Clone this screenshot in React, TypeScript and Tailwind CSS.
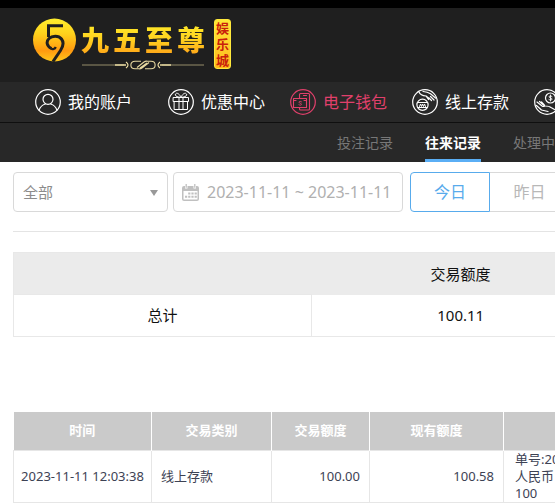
import type { ReactNode } from "react";

const navItems = [
  { label: "优惠中心", href: "#promo", icon: <GiftIcon />, active: false },
  { label: "电子钱包", href: "#wallet", icon: <WalletIcon />, active: true },
  { label: "线上存款", href: "#deposit", icon: <DepositIcon />, active: false },
];

const subNavItems = [
  { label: "投注记录", active: false },
  { label: "往来记录", active: true },
  { label: "处理中", active: false },
];

const records = [
  {
    time: "2023-11-11 12:03:38",
    type: "线上存款",
    amount: "100.00",
    balance: "100.58",
    note: ["单号:20", "人民币", "100"],
  },
];

/** 圆形图标外框 */
function CircleIcon({ children }: { children: ReactNode }) {
  return (
    <svg
      viewBox="0 0 26 26"
      className="size-[26px] shrink-0"
      fill="none"
      stroke="currentColor"
      strokeWidth="1.2"
      strokeLinecap="round"
      strokeLinejoin="round"
      aria-hidden="true"
    >
      <circle cx="13" cy="13" r="12.3" />
      {children}
    </svg>
  );
}

function UserIcon() {
  return (
    <CircleIcon>
      <circle cx="13" cy="10.3" r="5" />
      <path d="M4 21.2c1.2-3.3 3.7-5.4 6.300-6.200M22 21.200c-1.200-3.300-3.700-5.400-6.300-6.200" />
    </CircleIcon>
  );
}

function GiftIcon() {
  return (
    <CircleIcon>
      <path d="M5.500 8.500h15v4h-15zM6.500 12.500h13v8h-13zM11 8.500v12M15 8.500v12" strokeWidth="1" />
      <path d="M13 8.300C11.500 4.500 8.500 3.300 7.500 5S9 8.300 13 8.300ZM13 8.300c1.500-3.800 4.500-5 5.500-3.300S17 8.300 13 8.300Z" strokeWidth="1" />
    </CircleIcon>
  );
}

function WalletIcon() {
  return (
    <CircleIcon>
      <path d="M9.500 9V5.500q0-1 1-1h8q1 0 1 1v14.500q0 1-1 1h-8q-1 0-1-1V19M13.500 6.500h3" strokeWidth="1.100" />
      <path d="M3.500 9.500h13v9h-13zM3.500 11.500h2.500M14 11.500h2.500" strokeWidth="1.100" />
      <path d="M11.500 12.800c-1-.8-2.500-.5-2.500.4 0 1.200 2.500.8 2.500 2.100 0 1-1.600 1.200-2.600.4" strokeWidth=".9" />
    </CircleIcon>
  );
}

function DepositIcon() {
  return (
    <CircleIcon>
      <path d="M7 3c1 2.500 3.500 3.700 7 4l4.500 3.500M11 2.500c3 .2 5.500.9 7.500 2.200l5 4.300M14 7l2.500 3.500M17 9l2.500 2.500M18.500 7.500l3.500 3.500" />
      <circle cx="10.500" cy="15.800" r="5.600" />
      <path d="M6 13.500h9M6 18.500h9M7.500 17.500l1-2.500 1 2.500 1-2.500 1 2.500 1-2.500 1 2.500" strokeWidth="1" />
    </CircleIcon>
  );
}

function WithdrawIcon() {
  return (
    <CircleIcon>
      <circle cx="16.500" cy="9" r="5" />
      <path d="M18 7.500c-1.200-1-3-.6-3 .4 0 1.300 3.100.8 3.100 2.200 0 1.200-2 1.300-3.200.4M16.500 6v6" strokeWidth=".9" />
      <path d="M3 13l5 4c1.500 1 3 .4 2.500-.8L7.500 13M5.500 12.500l4 3.500M2.500 16.500l5 4.500 6.500 1.500M11 17c3 0 4.500 0 6 1.500l3.500 2" />
    </CircleIcon>
  );
}

function CalendarIcon() {
  return (
    <svg viewBox="0 0 17 17" className="size-[17px] shrink-0" aria-hidden="true">
      <path
        fill="#c0c0c0"
        fillRule="evenodd"
        d="M2 2h1v2.500h2.500V2h6v2.500H14V2h1q2 0 2 2v11q0 2-2 2H2q-2 0-2-2V4q0-2 2-2ZM1.500 7v8q0 .5.500.5h13q.5 0 .5-.5V7Z"
      />
      <path stroke="#c0c0c0" strokeWidth="1.300" d="M4.200 0v3.800M12.800 0v3.800" />
      <path stroke="#c0c0c0" strokeWidth="2" strokeDasharray="2.200 1" d="M6.200 9.500h8.600M3 12.700h11.800" />
    </svg>
  );
}

function Logo() {
  return (
    <a href="#home" className="flex items-start">
      <svg viewBox="0 0 44 44" className="mt-[10px] size-11 shrink-0" fill="none" aria-hidden="true">
        <defs>
          <linearGradient id="coin" x1="0" y1="0" x2="0" y2="1">
            <stop offset="0" stopColor="#ffee2e" />
            <stop offset=".35" stopColor="#ffd21c" />
            <stop offset=".75" stopColor="#ff9a10" />
            <stop offset="1" stopColor="#ffc81c" />
          </linearGradient>
        </defs>
        <circle cx="22.500" cy="22" r="21.500" fill="url(#coin)" />
        <path d="M31 7.800H16.500V19" stroke="#1f1f1f" strokeWidth="3" />
        <path
          d="M19.500 30.500c-5-2.500-5.500-7-2.500-10s9.500-3.500 12.500.5 1 8.500-1 11.500L21 43.500"
          stroke="#1f1f1f"
          strokeWidth="3"
        />
        <path d="M19 30.500c1.500 1.200 4 .5 4.800-1.500" stroke="#1f1f1f" strokeWidth="2.200" />
      </svg>
      <span className="ml-1 flex flex-col items-center pt-3">
        <span className="flex gap-1 bg-linear-to-b from-[#fff02a] via-[#ffd020] to-[#ff9416] bg-clip-text text-[28px] leading-10 font-black text-transparent">
          <span>九</span>
          <span>五</span>
          <span>至</span>
          <span>尊</span>
        </span>
        <svg viewBox="0 0 126 10" className="h-[10px] w-[126px]" fill="none" stroke="#e8d9a0" aria-hidden="true">
          <path d="M2 5h42M82 5h42" strokeWidth=".6" />
          <path d="M35 5h11M80 5h11" strokeWidth="1.400" />
          <path d="M46 2q4 3 0 6M80 2q-4 3 0 6" strokeWidth="1.200" />
          <path
            d="M59 8.800h-4c-5.500 0-5.500-7.600 0-7.600h6M67 1.200h4c5.500 0 5.500 7.600 0 7.600h-6M57 7.500l7-5.500q1.500-1 3-.8M60 8l7-5M69 2.500l-7 5.500q-1.500 1-3 .8"
            strokeWidth="1.100"
          />
        </svg>
      </span>
      <span className="mt-[11px] ml-2 flex w-[17px] flex-col items-center rounded-[3px] border border-[#ffe93b] bg-linear-to-b from-[#ffe838] to-[#ffb81c] text-[13px] font-bold text-[#c9200c]">
        <span className="h-4 leading-4">娱</span>
        <span className="h-4 leading-4">乐</span>
        <span className="h-4 leading-4">城</span>
      </span>
    </a>
  );
}

function Header() {
  return (
    <header className="border-t-8 border-black bg-[#1f1f1f] text-white">
      <div className="h-[74px] pl-8">
        <Logo />
      </div>
      <nav className="flex h-10 items-center bg-[#282828] pl-[35px] text-[16px]">
        <a href="#account" className="mr-9 flex shrink-0 items-center gap-[7px]">
          <UserIcon />
          我的账户
        </a>
        <div className="flex gap-[25px]">
          {navItems.map((item) => (
            <a
              key={item.label}
              href={item.href}
              className={`flex shrink-0 items-center gap-[7px] ${item.active ? "text-[#e0406b]" : "text-white"}`}
            >
              {item.icon}
              {item.label}
            </a>
          ))}
          <a href="#withdraw" className="shrink-0">
            <WithdrawIcon />
          </a>
        </div>
      </nav>
      <nav className="flex h-10 gap-8 border-t border-[#0f0f0f] bg-[#282828] pl-[337px] text-[14px]">
        {subNavItems.map((item) => (
          <a
            key={item.label}
            href="#records"
            className={
              item.active
                ? "flex shrink-0 items-center border-b-[3px] border-[#5aaef5] pt-[3px] font-bold"
                : "flex shrink-0 items-center text-[#777]"
            }
          >
            {item.label}
          </a>
        ))}
      </nav>
    </header>
  );
}

function Filters() {
  return (
    <form className="flex border-b border-[#e4e4e4] pt-[10px] pb-[19px]">
      <div className="relative mr-[5px] w-[155px] shrink-0">
        <select
          aria-label="交易类别"
          className="h-10 w-full appearance-none rounded border border-[#d9d9d9] bg-white px-[9px] text-[15px] text-[#8c8c8c]"
        >
          <option>全部</option>
        </select>
        <svg viewBox="0 0 8 6" className="pointer-events-none absolute top-[18px] right-[10px] h-[6px] w-[8px]" aria-hidden="true">
          <path d="M0 0h8L4 6z" fill="#999" />
        </svg>
      </div>
      <label className="mr-[7px] flex h-10 w-[230px] shrink-0 items-center gap-2 rounded border border-[#d9d9d9] pl-2">
        <CalendarIcon />
        <input
          type="text"
          aria-label="时间"
          defaultValue="2023-11-11 ~ 2023-11-11"
          className="w-full min-w-0 text-[16px] text-[#b0b0b0] outline-none"
        />
      </label>
      <button type="button" className="h-10 w-20 shrink-0 rounded-l border border-[#58abec] text-[16px] text-[#58abec]">
        今日
      </button>
      <button type="button" className="h-10 w-20 shrink-0 border-y border-r border-[#d9d9d9] text-[16px] text-[#b8b8b8]">
        昨日
      </button>
    </form>
  );
}

function SummaryTable() {
  return (
    <table className="mt-5 w-full min-w-[1192px] table-fixed border-collapse border border-[#e8e8e8] text-center text-[15px] text-[#111]">
      <thead className="bg-[#ebebeb]">
        <tr className="h-[42px]">
          <td className="w-[298px]" />
          <th className="w-[298px] font-normal">交易额度</th>
          <td />
        </tr>
      </thead>
      <tbody>
        <tr className="h-[42px]">
          <th className="border border-[#e8e8e8] font-normal">总计</th>
          <td>100.11</td>
          <td />
        </tr>
      </tbody>
    </table>
  );
}

function RecordTable() {
  return (
    <table className="mt-[75px] w-full min-w-[1192px] table-fixed border-collapse text-[13px] leading-[17px] text-[#3d4254]">
      <thead className="bg-[#cacaca] text-white">
        <tr className="h-[38px]">
          <th className="w-[138px] border-r border-white">时间</th>
          <th className="w-[120px] border-r border-white">交易类别</th>
          <th className="w-[98px] border-r border-white">交易额度</th>
          <th className="w-[134px] border-r border-white">现有额度</th>
          <td />
        </tr>
      </thead>
      <tbody>
        {records.map((row) => (
          <tr key={row.time}>
            <td className="border border-[#e6e6e6] text-center whitespace-nowrap">{row.time}</td>
            <td className="border border-[#e6e6e6] px-[9px]">{row.type}</td>
            <td className="border border-[#e6e6e6] px-[9px] text-right">{row.amount}</td>
            <td className="border border-[#e6e6e6] px-[9px] text-right">{row.balance}</td>
            <td className="border border-[#e6e6e6] px-[11px]">
              {row.note.map((line) => (
                <p key={line}>{line}</p>
              ))}
            </td>
          </tr>
        ))}
      </tbody>
    </table>
  );
}

export default function App() {
  return (
    <div className="overflow-x-clip bg-white font-['Noto_Sans','Noto_Sans_CJK_SC',sans-serif]">
      <Header />
      <main className="pl-[13px]">
        <Filters />
        <SummaryTable />
        <RecordTable />
      </main>
    </div>
  );
}
